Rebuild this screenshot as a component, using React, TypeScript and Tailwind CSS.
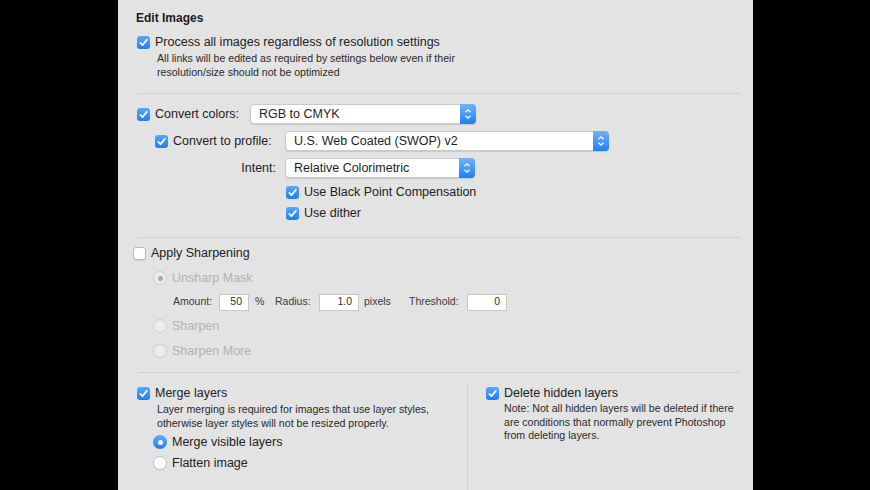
import React from 'react'

const font = { fontFamily: '"Liberation Sans", Arial, sans-serif' }

const Checkbox = ({ checked = false }: { checked?: boolean }) =>
  checked ? (
    <svg width="13" height="13" viewBox="0 0 13 13" className="shrink-0">
      <defs>
        <linearGradient id="cb" x1="0" y1="0" x2="0" y2="1">
          <stop offset="0" stopColor="#5aa7fb" />
          <stop offset="1" stopColor="#1b7ff5" />
        </linearGradient>
      </defs>
      <rect x="0" y="0" width="13" height="13" rx="3" fill="url(#cb)" />
      <path d="M3.3 6.8 L5.5 9.1 L9.8 3.9" fill="none" stroke="#fff" strokeWidth="1.7" strokeLinecap="round" strokeLinejoin="round" />
    </svg>
  ) : (
    <span className="block w-[13px] h-[13px] shrink-0 rounded-[3px] bg-white border border-[#b9b9b9] shadow-[0_1px_1px_rgba(0,0,0,0.08)]" />
  )

const Radio = ({ selected = false, disabled = false }: { selected?: boolean; disabled?: boolean }) => {
  if (disabled)
    return (
      <span className="flex items-center justify-center w-[14px] h-[14px] shrink-0 rounded-full bg-[#ececec] border border-[#cdcdcd]">
        {selected && <span className="block w-[5px] h-[5px] rounded-full bg-[#a9a9a9]" />}
      </span>
    )
  return selected ? (
    <span className="flex items-center justify-center w-[14px] h-[14px] shrink-0 rounded-full bg-gradient-to-b from-[#5ea9fb] to-[#1b7ff5]">
      <span className="block w-[5px] h-[5px] rounded-full bg-white" />
    </span>
  ) : (
    <span className="block w-[14px] h-[14px] shrink-0 rounded-full bg-white border border-[#b9b9b9]" />
  )
}

const Select = ({ text, width }: { text: string; width: string }) => (
  <div className={`flex h-[20px] ${width} rounded-[4px] bg-white border border-[#c9c9c9] shadow-[0_1px_1px_rgba(0,0,0,0.12)]`}>
    <div className="flex-1 flex items-center pl-[8px] text-[12.5px] text-[#1e1e1e]">{text}</div>
    <div className="w-[16px] -my-px -mr-px flex items-center justify-center rounded-r-[4px] bg-gradient-to-b from-[#6cb4fb] to-[#1a7ffa]">
      <svg width="16" height="20" viewBox="0 0 16 20">
        <path d="M5.5 8.3 L8 5.8 L10.5 8.3" fill="none" stroke="#fff" strokeWidth="1.3" />
        <path d="M5.5 11.7 L8 14.2 L10.5 11.7" fill="none" stroke="#fff" strokeWidth="1.3" />
      </svg>
    </div>
  </div>
)

const NumField = ({ value, width }: { value: string; width: string }) => (
  <div className={`h-[17px] ${width} bg-white border border-[#c8c8c8] flex items-center justify-end pr-[6px] text-[10.5px] text-[#333]`}>
    {value}
  </div>
)

const Divider = () => <div className="h-px ml-[20px] mr-[13px] bg-[#d0d0d0]" />

export default function App() {
  return (
    <div className="w-[870px] h-[490px] bg-black overflow-hidden" style={font}>
      <div className="ml-[118px] w-[635px] h-full bg-[#e3e3e3] text-[#222] flex flex-col">
        {/* Edit Images */}
        <div className="pl-[18px] pt-[9px] h-[27px] flex items-center text-[12px] font-bold text-[#1c1c1c]">Edit Images</div>
        <div className="mt-[6px] h-[18px] flex items-center pl-[19px] gap-[5px] text-[12.5px]">
          <Checkbox checked />
          <span>Process all images regardless of resolution settings</span>
        </div>
        <div className="pl-[39px] text-[10.6px] leading-[14px] text-[#2a2a2a]">
          <div>All links will be edited as required by settings below even if their</div>
          <div>resolution/size should not be optimized</div>
        </div>
        <div className="mt-[14px]">
          <Divider />
        </div>

        {/* Convert colors */}
        <div className="mt-[10px] flex items-center h-[20px] pl-[19px] text-[12.5px]">
          <Checkbox checked />
          <span className="ml-[5px] w-[95px]">Convert colors:</span>
          <Select text="RGB to CMYK" width="w-[226px]" />
        </div>
        <div className="mt-[7px] flex items-center h-[20px] pl-[37px] text-[12.5px]">
          <Checkbox checked />
          <span className="ml-[5px] w-[112px]">Convert to profile:</span>
          <Select text="U.S. Web Coated (SWOP) v2" width="w-[324px]" />
        </div>
        <div className="mt-[7px] flex items-center h-[20px] text-[12.5px]">
          <span className="w-[158px] text-right">Intent:</span>
          <span className="w-[9px]" />
          <Select text="Relative Colorimetric" width="w-[190px]" />
        </div>
        <div className="mt-[5px] flex items-center h-[18px] pl-[168px] gap-[5px] text-[12.5px]">
          <Checkbox checked />
          <span>Use Black Point Compensation</span>
        </div>
        <div className="mt-[3px] flex items-center h-[18px] pl-[168px] gap-[5px] text-[12.5px]">
          <Checkbox checked />
          <span>Use dither</span>
        </div>
        <div className="mt-[15px]">
          <Divider />
        </div>

        {/* Sharpening */}
        <div className="mt-[6px] flex items-center h-[18px] pl-[15px] gap-[5px] text-[12.5px]">
          <Checkbox />
          <span>Apply Sharpening</span>
        </div>
        <div className="mt-[7px] flex items-center h-[18px] pl-[35px] gap-[5px] text-[12.5px] text-[#b2b2b2]">
          <Radio selected disabled />
          <span>Unsharp Mask</span>
        </div>
        <div className="mt-[6px] flex items-center h-[18px] pl-[55px] text-[10.5px] text-[#3a3a3a]">
          <span className="w-[46px]">Amount:</span>
          <NumField value="50" width="w-[30px]" />
          <span className="ml-[6px] w-[20px]">%</span>
          <span className="w-[44px]">Radius:</span>
          <NumField value="1.0" width="w-[40px]" />
          <span className="ml-[5px] w-[45px]">pixels</span>
          <span className="w-[58px]">Threshold:</span>
          <NumField value="0" width="w-[40px]" />
        </div>
        <div className="mt-[6px] flex items-center h-[18px] pl-[35px] gap-[5px] text-[12.5px] text-[#b2b2b2]">
          <Radio disabled />
          <span>Sharpen</span>
        </div>
        <div className="mt-[7px] flex items-center h-[18px] pl-[35px] gap-[5px] text-[12.5px] text-[#b2b2b2]">
          <Radio disabled />
          <span>Sharpen More</span>
        </div>
        <div className="mt-[12px]">
          <Divider />
        </div>

        {/* Layers */}
        <div className="flex-1 flex">
          <div className="w-[349px] pt-[11px] pl-[19px]">
            <div className="flex items-center h-[18px] gap-[5px] text-[12.5px]">
              <Checkbox checked />
              <span>Merge layers</span>
            </div>
            <div className="pl-[20px] text-[10.6px] leading-[14px] text-[#2a2a2a]">
              <div>Layer merging is required for images that use layer styles,</div>
              <div>otherwise layer styles will not be resized properly.</div>
            </div>
            <div className="mt-[3px] flex items-center h-[18px] pl-[16px] gap-[5px] text-[12.5px]">
              <Radio selected />
              <span>Merge visible layers</span>
            </div>
            <div className="mt-[3px] flex items-center h-[18px] pl-[16px] gap-[5px] text-[12.5px]">
              <Radio />
              <span>Flatten image</span>
            </div>
          </div>
          <div className="mt-[10px] w-px bg-[#d0d0d0]" />
          <div className="pt-[11px] pl-[18px]">
            <div className="flex items-center h-[18px] gap-[5px] text-[12.5px]">
              <Checkbox checked />
              <span>Delete hidden layers</span>
            </div>
            <div className="pl-[18px] text-[10.6px] leading-[13.5px] text-[#2a2a2a]">
              <div>Note: Not all hidden layers will be deleted if there</div>
              <div>are conditions that normally prevent Photoshop</div>
              <div>from deleting layers.</div>
            </div>
          </div>
        </div>
      </div>
    </div>
  )
}
